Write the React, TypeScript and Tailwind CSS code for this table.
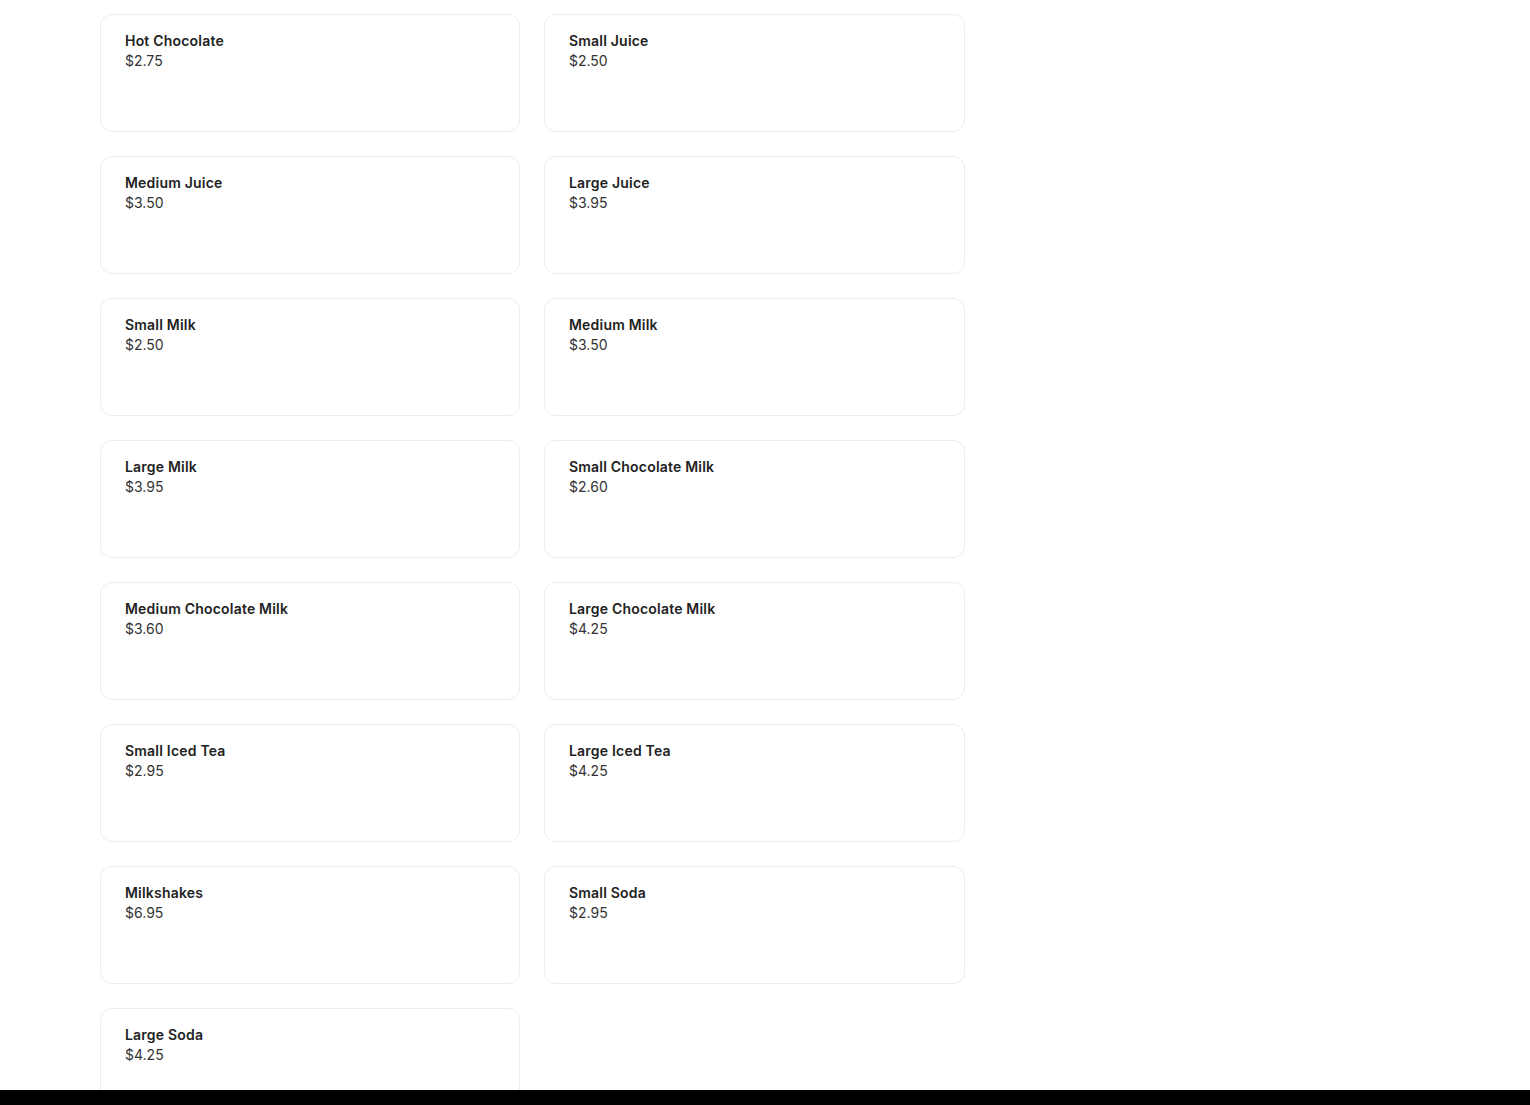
import React from 'react';

const items = [
  { name: 'Hot Chocolate', price: '$2.75' },
  { name: 'Small Juice', price: '$2.50' },
  { name: 'Medium Juice', price: '$3.50' },
  { name: 'Large Juice', price: '$3.95' },
  { name: 'Small Milk', price: '$2.50' },
  { name: 'Medium Milk', price: '$3.50' },
  { name: 'Large Milk', price: '$3.95' },
  { name: 'Small Chocolate Milk', price: '$2.60' },
  { name: 'Medium Chocolate Milk', price: '$3.60' },
  { name: 'Large Chocolate Milk', price: '$4.25' },
  { name: 'Small Iced Tea', price: '$2.95' },
  { name: 'Large Iced Tea', price: '$4.25' },
  { name: 'Milkshakes', price: '$6.95' },
  { name: 'Small Soda', price: '$2.95' },
  { name: 'Large Soda', price: '$4.25' },
];

const App: React.FC = () => {
  return (
    <div className="min-h-screen bg-white font-['Inter',sans-serif] text-sm">
      <div className="pl-[100px] pt-[14px] pb-6">
        {/* Menu grid */}
        <div className="grid grid-cols-[420px_421px] gap-6">
          {items.map((item) => (
            <div
              key={item.name}
              className="h-[118px] rounded-xl border border-[#ececec] bg-white px-6 py-4"
            >
              <div className="font-semibold leading-5 tracking-[0.2px] text-[#222222]">{item.name}</div>
              <div className="leading-5 text-[#333333]">{item.price}</div>
            </div>
          ))}
        </div>
      </div>

      {/* Bottom bar */}
      <div className="fixed bottom-0 left-0 right-0 h-[15px] bg-black" />
    </div>
  );
};

export default App;
